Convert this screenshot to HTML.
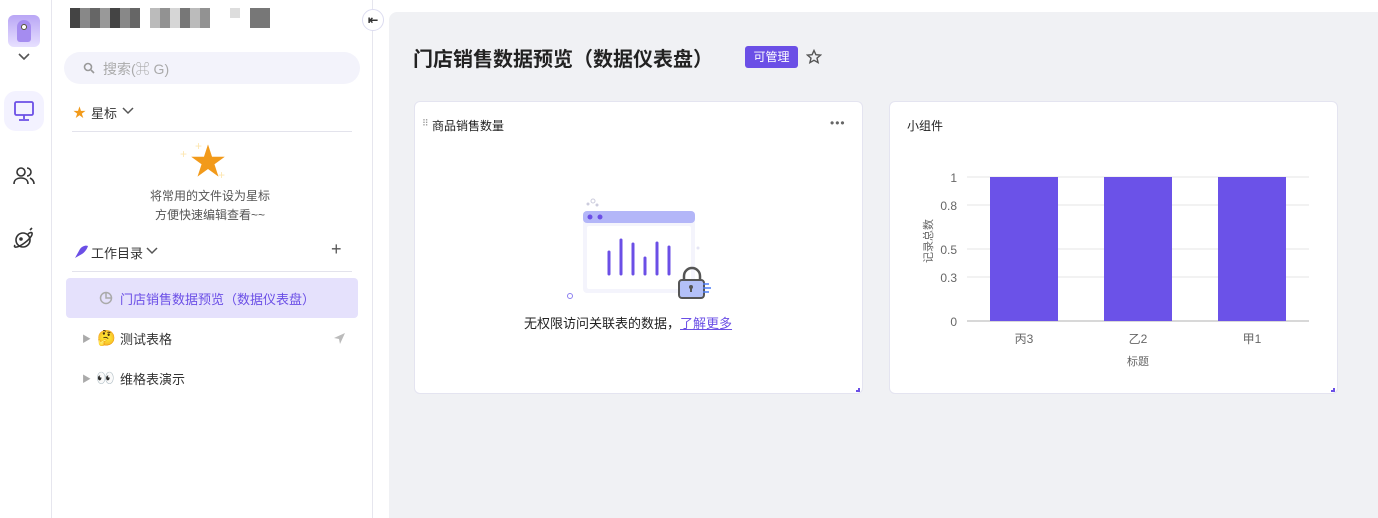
<!DOCTYPE html>
<html><head><meta charset="utf-8"><style>
*{margin:0;padding:0;box-sizing:border-box}
body{width:1378px;height:518px;overflow:hidden;background:#fff;font-family:"Liberation Sans","Noto Sans CJK SC",sans-serif;position:relative;color:#1f2329}
.abs{position:absolute}
</style></head><body>
<div class="abs" style="left:51px;top:0;width:1px;height:518px;background:#e6e6ee"></div>
<div class="abs" style="left:8px;top:15px;width:32px;height:32px;border-radius:6px;background:linear-gradient(#b9a6f5,#e7e0ff);overflow:hidden">
<div class="abs" style="left:9px;top:5px;width:14px;height:22px;border-radius:7px 7px 3px 3px;background:#a58cf0"></div>
<div class="abs" style="left:13px;top:9px;width:6px;height:6px;border-radius:50%;background:#fff;border:1px solid #553"></div></div>
<svg class="abs" style="left:17px;top:52px" width="14" height="10"><path d="M2 2l5 5 5-5" stroke="#555" stroke-width="1.6" fill="none"/></svg>
<div class="abs" style="left:4px;top:91px;width:40px;height:40px;border-radius:12px;background:#f3f2ff"></div>
<svg class="abs" style="left:13px;top:100px" width="22" height="22" fill="none" stroke="#6b4fe6" stroke-width="1.8"><rect x="2" y="2" width="18" height="13" rx="1.5"/><path d="M11 15v4M6 20h10"/></svg>
<svg class="abs" style="left:13px;top:165px" width="22" height="22" fill="none" stroke="#333" stroke-width="1.6"><circle cx="8" cy="7" r="4"/><path d="M1 19c0-4 3-6 7-6s7 2 7 6"/><path d="M14 3a4 4 0 010 8M17 13c2 1 4 3 4 6"/></svg>
<svg class="abs" style="left:12px;top:227px" width="24" height="24" fill="none" stroke="#333" stroke-width="1.6"><circle cx="11" cy="13" r="7"/><path d="M3 18c-2 3 2 3 8-1s10-9 9-11c-1-1-3 0-4 1"/><path d="M18 3l2-2"/><circle cx="9" cy="12" r="1" fill="#333"/></svg>
<div class="abs" style="left:372px;top:0;width:1px;height:518px;background:#e6e6ee"></div>
<div class="abs" style="left:70px;top:8px">
<div class="abs" style="left:0;top:0;width:70px;height:20px;background:repeating-linear-gradient(90deg,#444 0 10px,#888 10px 20px,#666 20px 30px,#999 30px 40px)"></div>
<div class="abs" style="left:80px;top:0;width:60px;height:20px;background:repeating-linear-gradient(90deg,#aaa 0 10px,#777 10px 20px,#ccc 20px 30px,#555 30px 40px);opacity:.8"></div>
<div class="abs" style="left:160px;top:0;width:10px;height:10px;background:#ddd"></div>
<div class="abs" style="left:180px;top:0;width:20px;height:20px;background:#777"></div>
</div>
<div class="abs" style="left:362px;top:9px;width:22px;height:22px;border-radius:50%;border:1px solid #dcdcf0;background:#fff;font-size:12px;font-weight:bold;text-align:center;line-height:20px;color:#333">⇤</div>
<div class="abs" style="left:64px;top:52px;width:296px;height:32px;border-radius:16px;background:#f3f3fb"></div>
<svg class="abs" style="left:83px;top:62px" width="12" height="12" fill="none" stroke="#999" stroke-width="1.6"><circle cx="5" cy="5" r="3.5"/><path d="M8 8l3 3"/></svg>
<div class="abs" style="left:103px;top:59px;font-size:14px;color:#aaa">搜索(⌘ G)</div>
<div class="abs" style="left:73px;top:102px;font-size:13px;color:#f29a1a">★</div>
<div class="abs" style="left:91px;top:103px;font-size:13px;color:#333">星标</div>
<svg class="abs" style="left:122px;top:107px" width="12" height="8"><path d="M1 1l5 5 5-5" stroke="#555" stroke-width="1.5" fill="none"/></svg>
<div class="abs" style="left:72px;top:131px;width:280px;height:1px;background:#e3e3ec"></div>
<div class="abs" style="left:190px;top:144px;font-size:36px;color:#f29a1a;line-height:1">★</div>
<div class="abs" style="left:180px;top:147px;font-size:12px;color:#fde6b0">+</div>
<div class="abs" style="left:195px;top:139px;font-size:12px;color:#fde6b0">+</div>
<div class="abs" style="left:218px;top:168px;font-size:12px;color:#fde6b0">+</div>
<div class="abs" style="left:60px;top:187px;width:300px;text-align:center;font-size:12px;color:#555;line-height:19px">将常用的文件设为星标<br>方便快速编辑查看~~</div>
<svg class="abs" style="left:73px;top:244px" width="16" height="16"><path d="M2 14l5-9c2-3 6-4 8-3-1 3-3 6-6 8z" fill="#6b4fe6"/></svg>
<div class="abs" style="left:91px;top:243px;font-size:13px;color:#333">工作目录</div>
<svg class="abs" style="left:146px;top:247px" width="12" height="8"><path d="M1 1l5 5 5-5" stroke="#555" stroke-width="1.5" fill="none"/></svg>
<div class="abs" style="left:331px;top:239px;font-size:18px;color:#555">+</div>
<div class="abs" style="left:72px;top:271px;width:280px;height:1px;background:#e3e3ec"></div>
<div class="abs" style="left:66px;top:278px;width:292px;height:40px;border-radius:4px;background:#e5e1fc"></div>
<svg class="abs" style="left:99px;top:291px" width="14" height="14" fill="none" stroke="#aaa" stroke-width="1.5"><circle cx="7" cy="7" r="5.5"/><path d="M7 1.5V7h5.5"/></svg>
<div class="abs" style="left:120px;top:289px;font-size:13px;color:#6b4fe6">门店销售数据预览（数据仪表盘）</div>
<div class="abs" style="left:82px;top:332px;font-size:9px;color:#aaa">▶</div>
<div class="abs" style="left:97px;top:329px;font-size:15px">🤔</div>
<div class="abs" style="left:120px;top:329px;font-size:13px;color:#333">测试表格</div>
<svg class="abs" style="left:333px;top:332px" width="13" height="13"><path d="M1 6l11-5-5 11-1-5z" fill="#bbb"/></svg>
<div class="abs" style="left:82px;top:372px;font-size:9px;color:#aaa">▶</div>
<div class="abs" style="left:96px;top:369px;font-size:15px">👀</div>
<div class="abs" style="left:120px;top:369px;font-size:13px;color:#333">维格表演示</div>
<div class="abs" style="left:389px;top:12px;width:989px;height:506px;background:#f0f1f4;border-radius:8px 0 0 0"></div>
<div class="abs" style="left:413px;top:43px;font-size:20px;font-weight:bold;color:#222">门店销售数据预览（数据仪表盘）</div>
<div class="abs" style="left:745px;top:46px;width:53px;height:22px;border-radius:3px;background:#6b4fe6;color:#fff;font-size:12px;text-align:center;line-height:22px">可管理</div>
<svg class="abs" style="left:806px;top:49px" width="16" height="16" fill="none" stroke="#555" stroke-width="1.4"><path d="M8 1.5l1.9 4.2 4.6.4-3.5 3 1.1 4.5L8 11.3 3.9 13.6 5 9.1l-3.5-3 4.6-.4z"/></svg>
<div class="abs" style="left:414px;top:101px;width:449px;height:293px;background:#fff;border-radius:6px;border:1px solid #e4e4f0"></div>
<div class="abs" style="left:422px;top:118px;font-size:9px;color:#999;letter-spacing:-1px">⠿</div>
<div class="abs" style="left:432px;top:117px;font-size:12px;color:#222">商品销售数量</div>
<div class="abs" style="left:830px;top:116px;font-size:12px;color:#666;letter-spacing:1px">•••</div>
<svg class="abs" style="left:565px;top:190px" width="150" height="112">
<circle cx="28" cy="11" r="2" fill="none" stroke="#ccd" /><circle cx="23" cy="14" r="1.5" fill="#ccd"/><circle cx="32" cy="15" r="1.5" fill="#ccd"/>
<rect x="18" y="21" width="112" height="82" rx="4" fill="#f4f4fc"/>
<rect x="18" y="21" width="112" height="12" rx="4" fill="#b3b6f8"/>
<rect x="22" y="36" width="104" height="63" rx="2" fill="#fff"/>
<circle cx="25" cy="27" r="2.5" fill="#6b4fe6"/><circle cx="35" cy="27" r="2.5" fill="#6b4fe6"/>
<g stroke="#6b4fe6" stroke-width="3" stroke-linecap="round"><path d="M44 62v22M56 50v34M68 54v30M80 68v16M92 53v31M104 57v27"/></g>
<circle cx="133" cy="58" r="1.5" fill="#e4e4f4"/><circle cx="5" cy="106" r="2.5" fill="none" stroke="#8c7ff0"/>
<path d="M119 92v-6a8 8 0 0116 0v6" fill="none" stroke="#555" stroke-width="2.5"/>
<rect x="114" y="90" width="25" height="18" rx="3" fill="#b3c0f8" stroke="#555" stroke-width="2"/>
<circle cx="126" cy="97" r="2" fill="#555"/><path d="M126 97v5" stroke="#555" stroke-width="2"/>
<path d="M138 94h6M138 98h8M138 102h6" stroke="#4c7cf5" stroke-width="1.5"/>
</svg>
<div class="abs" style="left:524px;top:313px;font-size:13px;color:#222">无权限访问关联表的数据，<span style="color:#6b4fe6;text-decoration:underline">了解更多</span></div>
<div class="abs" style="left:856px;top:388px;width:4px;height:4px;border-right:2px solid #6b4fe6;border-bottom:2px solid #6b4fe6"></div>
<div class="abs" style="left:889px;top:101px;width:449px;height:293px;background:#fff;border-radius:6px;border:1px solid #e4e4f0"></div>
<div class="abs" style="left:907px;top:117px;font-size:12px;color:#222">小组件</div>
<svg class="abs" style="left:889px;top:101px" width="449" height="293" font-family="Liberation Sans,Noto Sans CJK SC,sans-serif" font-size="12" fill="#666">
<g stroke="#e5e5e5"><path d="M78 76h342M78 104h342M78 148h342M78 176h342"/></g>
<path d="M78 220h342" stroke="#ccc" stroke-width="1.5"/>
<g fill="#6b52e8"><rect x="101" y="76" width="68" height="144"/><rect x="215" y="76" width="68" height="144"/><rect x="329" y="76" width="68" height="144"/></g>
<g text-anchor="end"><text x="68" y="81">1</text><text x="68" y="109">0.8</text><text x="68" y="153">0.5</text><text x="68" y="181">0.3</text><text x="68" y="225">0</text></g>
<g text-anchor="middle"><text x="135" y="242">丙3</text><text x="249" y="242">乙2</text><text x="363" y="242">甲1</text><text x="249" y="264" font-size="11">标题</text></g>
<text transform="translate(43,140) rotate(-90)" text-anchor="middle" font-size="11">记录总数</text>
</svg>
<div class="abs" style="left:1331px;top:388px;width:4px;height:4px;border-right:2px solid #6b4fe6;border-bottom:2px solid #6b4fe6"></div>
</body></html>
